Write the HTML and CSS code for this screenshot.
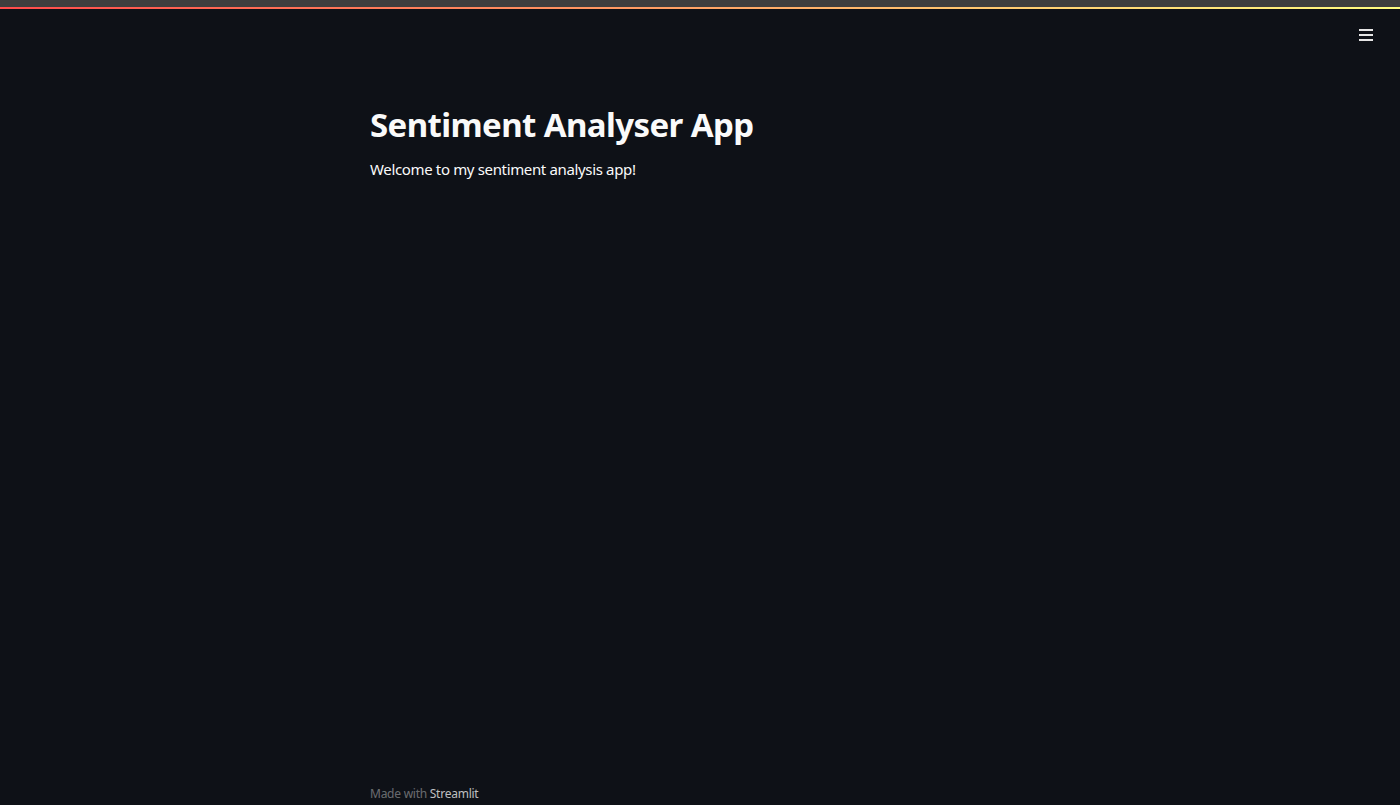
FILE: index.html
```html
<!DOCTYPE html>
<html lang="en">
<head>
<meta charset="utf-8">
<title>Sentiment Analyser App</title>
<link rel="stylesheet" href="styles.css">
</head>
<body>
<div class="app">
  <div class="topband"></div>
  <div class="decoration"></div>
  <header class="toolbar">
    <button class="menu" aria-label="Main menu">
      <svg width="14" height="12" viewBox="0 0 14 12"><path d="M0 1h14M0 6h14M0 11h14" stroke="#e6e6e6" stroke-width="2" fill="none"/></svg>
    </button>
  </header>
  <main class="main">
    <div class="block">
      <h1 class="title">Sentiment Analyser App</h1>
      <p class="text">Welcome to my sentiment analysis app!</p>
    </div>
  </main>
  <footer class="footer">
    <div class="footer-inner">Made with <a class="brand">Streamlit</a></div>
  </footer>
</div>
</body>
</html>
```
FILE: styles.css
```css
html, body {
  margin: 0;
  padding: 0;
  height: 100%;
  background: #0e1117;
}
.app {
  height: 100%;
  display: flex;
  flex-direction: column;
  font-family: "Noto Sans", "Open Sans", sans-serif;
  color: #fafafa;
}
.topband {
  height: 7px;
  background: #3e3e3e;
}
.decoration {
  height: 2px;
  background: linear-gradient(90deg, #ff4b4b, #fffd80);
}
.toolbar {
  display: flex;
  justify-content: flex-end;
  padding: 20px 27px 0 0;
  height: 28px;
}
.menu {
  background: none;
  border: 0;
  padding: 0;
  width: 14px;
  height: 12px;
  display: flex;
}
.main {
  flex: 1;
}
.block {
  width: 660px;
  margin: 0 auto;
  padding-top: 47px;
}
.title {
  margin: 0;
  font-size: 33px;
  font-weight: 700;
  line-height: 1.3;
  letter-spacing: -0.6px;
}
.text {
  margin: 11px 0 0;
  font-size: 15px;
  line-height: 1.5;
  letter-spacing: -0.35px;
}
.footer-inner {
  width: 660px;
  margin: 0 auto;
  font-size: 12px;
  line-height: 16px;
  padding-bottom: 3px;
  letter-spacing: -0.25px;
  color: rgba(250, 250, 250, 0.4);
}
.brand {
  color: rgba(250, 250, 250, 0.75);
}
```
